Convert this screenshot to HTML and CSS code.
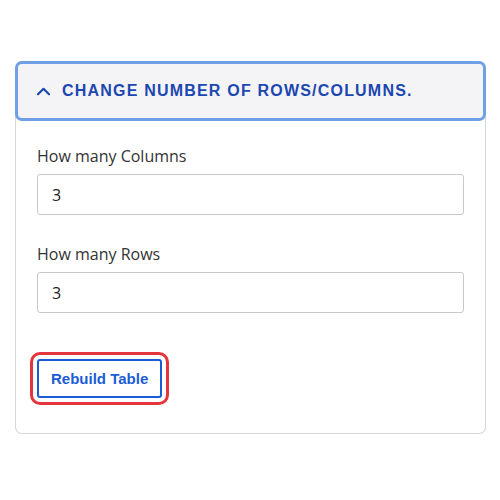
FILE: index.html
```html
<!DOCTYPE html>
<html>
<head>
<meta charset="utf-8">
<link rel="stylesheet" href="styles.css">
</head>
<body>
<div class="page">
  <div class="card">
    <div class="card-header">
      <svg class="chev" width="15" height="10" viewBox="0 0 15 10"><path d="M2 8.2 L7.5 2.8 L13 8.2" fill="none" stroke="#1d47b0" stroke-width="2.2" stroke-linecap="round" stroke-linejoin="round"/></svg>
      <span class="title">CHANGE NUMBER OF ROWS/COLUMNS.</span>
    </div>
    <div class="card-body">
      <div class="field">
        <label class="label">How many Columns</label>
        <input class="input" type="text" value="3">
      </div>
      <div class="field">
        <label class="label">How many Rows</label>
        <input class="input" type="text" value="3">
      </div>
      <button class="btn">Rebuild Table</button>
    </div>
  </div>
</div>
</body>
</html>
```
FILE: styles.css
```css
html, body { margin: 0; padding: 0; background: #fff; }
.page { padding: 61px 14px 0 15px; }
.card {
  width: 471px;
  border: 1px solid #d6d6d6;
  border-top: none;
  border-radius: 7px;
  box-sizing: border-box;
}
.card-header {
  margin: 0 -1px;
  height: 60px;
  box-sizing: border-box;
  border: 3px solid #6f9fe6;
  border-radius: 7px;
  background: #f4f4f6;
  display: flex;
  align-items: center;
  padding-left: 18px;
  gap: 11px;
}
.chev { display: block; }
.title {
  font-family: "Liberation Sans", Arial, sans-serif;
  font-weight: bold;
  font-size: 16px;
  letter-spacing: 1.2px;
  color: #1d47b0;
}
.card-body {
  padding: 23px 21px 35px 21px;
  display: flex;
  flex-direction: column;
}
.field { display: flex; flex-direction: column; margin-bottom: 27px; }
.label {
  font-family: "Open Sans", "Noto Sans", sans-serif;
  font-size: 16px;
  line-height: 24px;
  color: #333;
  margin-bottom: 6px;
}
.input {
  height: 41px;
  box-sizing: border-box;
  border: 1px solid #c9c9c9;
  border-radius: 3px;
  padding: 0 14px;
  font-family: "Open Sans", "Noto Sans", sans-serif;
  font-size: 16px;
  color: #222;
  width: 100%;
}
.btn {
  align-self: flex-start;
  margin-top: 19px;
  height: 39px;
  padding: 0 12px;
  background: #fff;
  border: 2px solid #1a5cd6;
  border-radius: 3px;
  color: #1a5cd6;
  font-family: "Liberation Sans", Arial, sans-serif;
  font-weight: bold;
  font-size: 15px;
  outline: 3px solid #e3353b;
  outline-offset: 4px;
}
```
